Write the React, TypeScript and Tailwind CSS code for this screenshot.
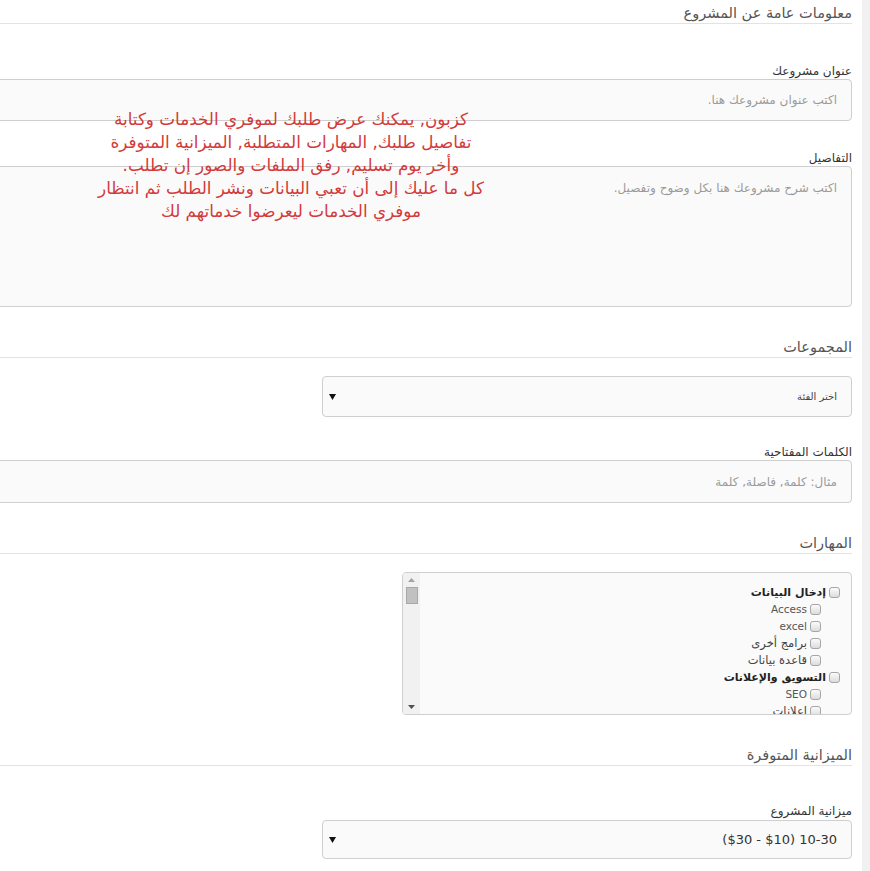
import React from "react";

const Check = () => (
  <span className="inline-block w-[11px] h-[11px] shrink-0 rounded-[3px] border border-[#a6a6a6] bg-gradient-to-b from-[#fbfbfb] to-[#dcdcdc]" />
);

const SectionHeader = ({ text, mt }: { text: string; mt: string }) => (
  <div className={`${mt} text-[14.5px] leading-[20px] text-[#555] border-b border-[#e3e3e3]`}>{text}</div>
);

const Label = ({ text, mt }: { text: string; mt: string }) => (
  <div className={`${mt} text-[12px] leading-[15px] text-[#333]`}>{text}</div>
);

const Arrow = () => (
  <svg width="7" height="6" viewBox="0 0 7 6" className="shrink-0">
    <polygon points="0,0 7,0 3.5,6" fill="#111" />
  </svg>
);

export default function App() {
  const items: { t: string; bold?: boolean; sub?: boolean; latin?: boolean }[] = [
    { t: "إدخال البيانات", bold: true },
    { t: "Access", sub: true, latin: true },
    { t: "excel", sub: true, latin: true },
    { t: "برامج أخرى", sub: true },
    { t: "قاعدة بيانات", sub: true },
    { t: "التسويق والإعلانات", bold: true },
    { t: "SEO", sub: true, latin: true },
    { t: "إعلانات", sub: true },
  ];
  return (
    <div
      dir="rtl"
      className="relative w-[870px] h-[871px] overflow-hidden bg-white flex font-['DejaVu_Sans','Noto_Sans',sans-serif]"
    >
      <div className="w-[8px] h-full shrink-0 bg-[#f1f1f1]" />
      <div className="w-[10px] h-full shrink-0" />
      <div className="w-[900px] shrink-0 flex flex-col">
        <SectionHeader text="معلومات عامة عن المشروع" mt="mt-[3px]" />

        <Label text="عنوان مشروعك" mt="mt-[40px]" />
        <div className="h-[42px] rounded-[4px] border border-[#cfcfcf] bg-[#fafafa] flex items-center pr-[14px] text-[12px] text-[#9a9a9a]">
          اكتب عنوان مشروعك هنا.
        </div>

        <Label text="التفاصيل" mt="mt-[30px]" />
        <div className="h-[141px] rounded-[4px] border border-[#cfcfcf] bg-[#fafafa] pr-[14px] pt-[12px] text-[12px] leading-[18px] text-[#9a9a9a]">
          اكتب شرح مشروعك هنا بكل وضوح وتفصيل.
        </div>

        <SectionHeader text="المجموعات" mt="mt-[30px]" />
        <div className="mt-[18px] w-[530px] h-[41px] rounded-[4px] border border-[#cfcfcf] bg-[#fafafa] flex items-center justify-between pr-[14px] pl-[6px]">
          <span className="text-[10px] text-[#444]">اختر الفئة</span>
          <Arrow />
        </div>

        <Label text="الكلمات المفتاحية" mt="mt-[28px]" />
        <div className="h-[43px] rounded-[4px] border border-[#cfcfcf] bg-[#fafafa] flex items-center pr-[14px] text-[12px] text-[#9a9a9a]">
          مثال: كلمة, فاصلة, كلمة
        </div>

        <SectionHeader text="المهارات" mt="mt-[30px]" />
        <div className="mt-[18px] w-[450px] h-[143px] rounded-[4px] border border-[#cfcfcf] bg-[#fafafa] flex overflow-hidden">
          <div className="flex-1 overflow-hidden pr-[11px] pt-[11px]">
            {items.map((it, i) => (
              <div
                key={i}
                className={`h-[17px] flex items-center gap-[3px] ${it.sub ? "pr-[19px]" : ""}`}
              >
                <Check />
                <span
                  className={`${it.latin ? "text-[10.5px] text-[#555]" : it.bold ? "text-[11px] font-bold text-[#222]" : "text-[11.5px] text-[#444]"} leading-[17px]`}
                >
                  {it.t}
                </span>
              </div>
            ))}
          </div>
          <div className="w-[17px] h-full bg-[#f1f1f1] flex flex-col items-center pt-[5px] pb-[5px]">
            <svg width="7" height="4" viewBox="0 0 7 4">
              <polygon points="0,4 7,4 3.5,0" fill="#a3a3a3" />
            </svg>
            <div className="mt-[5px] w-[12px] h-[17px] bg-[#c1c1c1] border border-[#a8a8a8]" />
            <div className="flex-1" />
            <svg width="7" height="4" viewBox="0 0 7 4">
              <polygon points="0,0 7,0 3.5,4" fill="#505050" />
            </svg>
          </div>
        </div>

        <SectionHeader text="الميزانية المتوفرة" mt="mt-[30px]" />
        <Label text="ميزانية المشروع" mt="mt-[38px]" />
        <div className="mt-[1px] w-[530px] h-[39px] rounded-[4px] border border-[#cfcfcf] bg-[#fafafa] flex items-center justify-between pr-[14px] pl-[6px]">
          <span className="text-[13px] text-[#333]">10-30 ($10 - $30)</span>
          <Arrow />
        </div>
      </div>

      <div className="absolute left-[81px] top-[108px] w-[420px] text-center text-[16.8px] leading-[23px] text-[#d33a3a]">
        كزبون, يمكنك عرض طلبك لموفري الخدمات وكتابة
        <br />
        تفاصيل طلبك, المهارات المتطلبة, الميزانية المتوفرة
        <br />
        وأخر يوم تسليم, رفق الملفات والصور إن تطلب.
        <br />
        كل ما عليك إلى أن تعبي البيانات ونشر الطلب ثم انتظار
        <br />
        موفري الخدمات ليعرضوا خدماتهم لك
      </div>
    </div>
  );
}
